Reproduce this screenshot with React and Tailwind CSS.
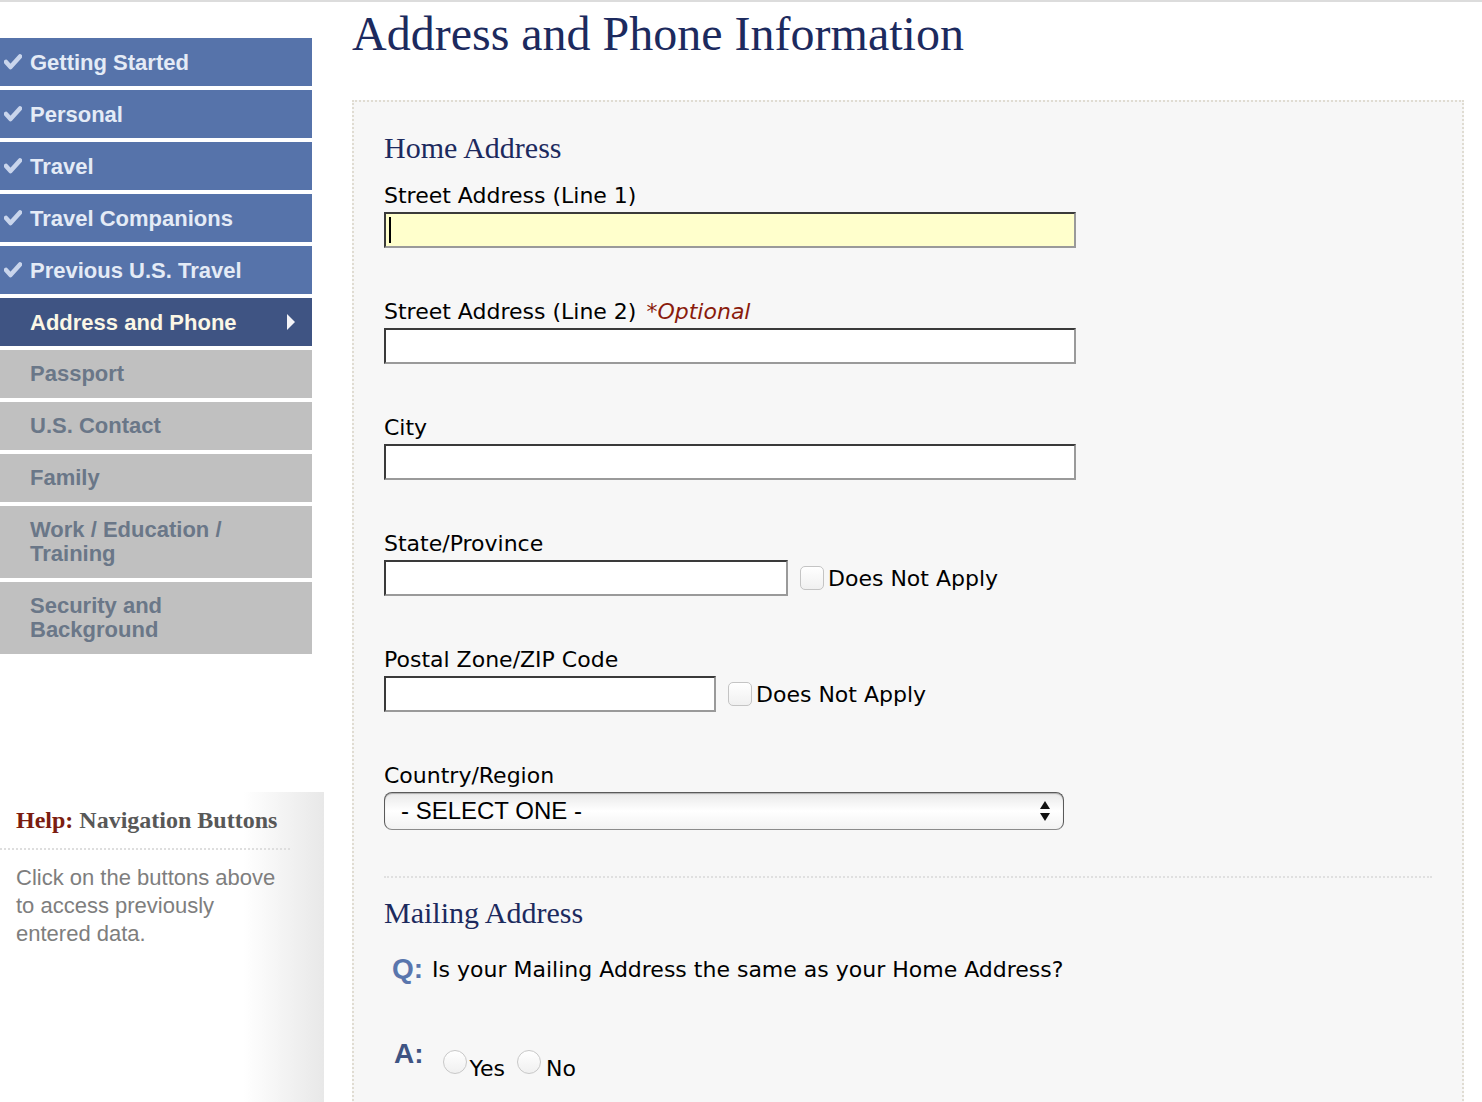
import React from "react";

const done = ["Getting Started", "Personal", "Travel", "Travel Companions", "Previous U.S. Travel"];
const todo = [["Passport"], ["U.S. Contact"], ["Family"], ["Work / Education /", "Training"], ["Security and", "Background"]];

const sans = { fontFamily: '"DejaVu Sans", Verdana, sans-serif' };
const arial = { fontFamily: '"Liberation Sans", Arial, sans-serif' };
const serif = { fontFamily: '"Liberation Serif", "Times New Roman", serif' };

function Check() {
  return (
    <svg width="18" height="16" viewBox="0 0 18 16" className="shrink-0">
      <path d="M2 8 L6.5 13 L16 2.5" fill="none" stroke="#c9d5ec" strokeWidth="4.5" strokeLinecap="round" strokeLinejoin="round" />
    </svg>
  );
}

function Label({ children }) {
  return (
    <div className="h-[28px] flex items-center text-[22px] leading-[28px] text-black whitespace-nowrap" style={sans}>
      {children}
    </div>
  );
}

function Field({ label, optional, width, yellow, dna }) {
  return (
    <div className="flex flex-col gap-[2px]">
      <Label>
        <span>{label}</span>
        {optional && <span className="ml-[10px] italic text-[#8a1b0c]">*Optional</span>}
      </Label>
      <div className="flex items-center">
        <div
          className={`h-[36px] border-2 border-t-[#3a3a3a] border-l-[#3a3a3a] border-b-[#9a9a9a] border-r-[#9a9a9a] flex items-center pl-[3px] ${yellow ? "bg-[#ffffcc]" : "bg-white"}`}
          style={{ width }}
        >
          {yellow && <div className="w-[2px] h-[26px] bg-black" />}
        </div>
        {dna && (
          <div className="flex items-center ml-[12px]">
            <div className="w-[24px] h-[24px] rounded-[5px] border border-[#c4c4c4] bg-gradient-to-b from-white to-[#f0f0f0]" />
            <span className="ml-[4px] text-[22px] text-black" style={sans}>Does Not Apply</span>
          </div>
        )}
      </div>
    </div>
  );
}

export default function App() {
  return (
    <div className="w-[1482px] h-[1102px] overflow-hidden bg-white relative">
      <div className="h-[2px] bg-[#dcdcdc]" />
      <div className="flex">
        {/* Sidebar */}
        <div className="w-[324px] shrink-0 flex flex-col">
          <div className="w-[312px] mt-[36px] flex flex-col gap-[4px]" style={arial}>
            {done.map((t) => (
              <div key={t} className="h-[48px] bg-[#5673aa] flex items-center pl-[4px] text-[22px] font-bold text-[#e4ebf6]">
                <Check />
                <span className="ml-[8px]">{t}</span>
              </div>
            ))}
            <div className="h-[48px] bg-[#3f5483] flex items-center justify-between pl-[30px] pr-[16px] text-[22px] font-bold text-[#fbf7e6]">
              <span>Address and Phone</span>
              <svg width="10" height="18" viewBox="0 0 10 18"><path d="M1 1 L9 9 L1 17 Z" fill="#f4f4f8" /></svg>
            </div>
            {todo.map((lines) => (
              <div key={lines[0]} className={`${lines.length > 1 ? "h-[72px]" : "h-[48px]"} bg-[#c0c0c0] flex flex-col justify-center pl-[30px] text-[22px] leading-[24px] font-bold text-[#6a7788]`}>
                {lines.map((l) => <span key={l}>{l}</span>)}
              </div>
            ))}
          </div>
          <div className="mt-[138px] h-[400px] bg-gradient-to-r from-white from-75% to-[#e8e8e8] pt-[14px]">
            <div className="pl-[16px] text-[24px] font-bold leading-[28px]" style={serif}>
              <span className="text-[#7b1d10]">Help:</span> <span className="text-[#585858]">Navigation Buttons</span>
            </div>
            <div className="mt-[14px] w-[290px] border-t-2 border-dotted border-[#dedede]" />
            <div className="pl-[16px] pt-[14px] text-[22px] leading-[28px] text-[#7e7e7e]" style={arial}>
              Click on the buttons above<br />to access previously<br />entered data.
            </div>
          </div>
        </div>

        {/* Main */}
        <div className="ml-[28px] flex-1 flex flex-col">
          <h1 className="text-[48px] leading-[64px] text-[#1c2a5e]" style={serif}>
            Address and Phone Information
          </h1>
          <div className="mt-[34px] w-[1112px] h-[1100px] bg-[#f7f7f7] border-2 border-dotted border-[#e0dcd2] pl-[30px] pr-[30px] pt-[28px]">
            <div className="text-[30px] leading-[36px] text-[#1c2a5e]" style={serif}>Home Address</div>
            <div className="mt-[16px] flex flex-col gap-[50px]">
              <Field label="Street Address (Line 1)" width={692} yellow />
              <Field label="Street Address (Line 2)" optional width={692} />
              <Field label="City" width={692} />
              <Field label="State/Province" width={404} dna />
              <Field label="Postal Zone/ZIP Code" width={332} dna />
              <div className="flex flex-col gap-[2px]">
                <Label>Country/Region</Label>
                <div className="w-[680px] h-[38px] rounded-[8px] border border-[#5a5a5a] border-b-[#8a8a8a] bg-gradient-to-b from-[#e9e9e9] via-white to-[#f2f2f2] shadow-[inset_0_1px_1px_rgba(0,0,0,0.25)] flex items-center justify-between pl-[16px] pr-[12px]">
                  <span className="text-[24px] text-black" style={arial}>- SELECT ONE -</span>
                  <svg width="12" height="22" viewBox="0 0 12 22">
                    <path d="M6 1 L11 9 L1 9 Z" fill="#111" />
                    <path d="M1 13 L11 13 L6 21 Z" fill="#111" />
                  </svg>
                </div>
              </div>
            </div>
            <div className="mt-[46px] w-[1048px] border-t-2 border-dotted border-[#e0e0e0]" />
            <div className="mt-[17px] text-[30px] leading-[36px] text-[#1c2a5e]" style={serif}>Mailing Address</div>
            <div className="mt-[20px] flex items-center pl-[8px] h-[36px]">
              <span className="text-[28px] font-bold text-[#5a76ad]" style={arial}>Q:</span>
              <span className="ml-[9px] text-[22px] text-black" style={sans}>Is your Mailing Address the same as your Home Address?</span>
            </div>
            <div className="mt-[51px] flex items-start pl-[10px]">
              <span className="text-[28px] font-bold leading-[32px] text-[#3f5483]" style={arial}>A:</span>
              <div className="ml-[19px] mt-[12px] w-[24px] h-[24px] rounded-full border border-[#c8c8c8] bg-gradient-to-b from-white to-[#f0f0f0]" />
              <span className="ml-[3px] mt-[17px] text-[22px] leading-[28px] text-black" style={sans}>Yes</span>
              <div className="ml-[12px] mt-[12px] w-[24px] h-[24px] rounded-full border border-[#c8c8c8] bg-gradient-to-b from-white to-[#f0f0f0]" />
              <span className="ml-[5px] mt-[17px] text-[22px] leading-[28px] text-black" style={sans}>No</span>
            </div>
          </div>
        </div>
      </div>
    </div>
  );
}
